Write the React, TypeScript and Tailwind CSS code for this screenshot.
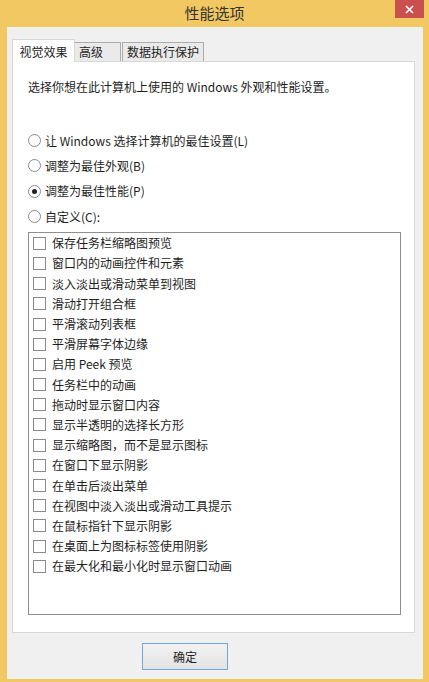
const font = { fontFamily: '"Noto Sans CJK SC", "Noto Sans", sans-serif' };

const items = [
  "保存任务栏缩略图预览",
  "窗口内的动画控件和元素",
  "淡入淡出或滑动菜单到视图",
  "滑动打开组合框",
  "平滑滚动列表框",
  "平滑屏幕字体边缘",
  "启用 Peek 预览",
  "任务栏中的动画",
  "拖动时显示窗口内容",
  "显示半透明的选择长方形",
  "显示缩略图，而不是显示图标",
  "在窗口下显示阴影",
  "在单击后淡出菜单",
  "在视图中淡入淡出或滑动工具提示",
  "在鼠标指针下显示阴影",
  "在桌面上为图标标签使用阴影",
  "在最大化和最小化时显示窗口动画",
];

const radios = [
  { label: "让 Windows 选择计算机的最佳设置(L)", checked: false },
  { label: "调整为最佳外观(B)", checked: false },
  { label: "调整为最佳性能(P)", checked: true },
  { label: "自定义(C):", checked: false },
];

function Radio({ checked }: { checked: boolean }) {
  return (
    <span className="w-[13px] h-[13px] rounded-full border border-[#8a8a8a] bg-white flex items-center justify-center shrink-0">
      {checked && <span className="w-[5px] h-[5px] rounded-full bg-[#222]" />}
    </span>
  );
}

export default function App() {
  return (
    <div
      className="w-[429px] h-[682px] bg-[#f1c862] flex flex-col text-[12px] text-[#1e1e1e] overflow-hidden"
      style={font}
    >
      {/* title bar */}
      <div className="h-[27px] shrink-0 relative flex items-center justify-center">
        <span className="text-[15px] text-[#333] leading-none -mt-[2px]">性能选项</span>
        <div className="absolute right-[5px] top-0 w-[29px] h-[18px] bg-[#c9504c] flex items-center justify-center">
          <svg width="9" height="9" viewBox="0 0 9 9">
            <path d="M1 1 L8 8 M8 1 L1 8" stroke="#fff" strokeWidth="1.6" />
          </svg>
        </div>
      </div>

      {/* client area */}
      <div className="ml-[7px] mr-[6px] h-[652px] bg-[#f0f0f0] flex flex-col">
        {/* tabs */}
        <div className="ml-[5px] mt-[12px] h-[22px] flex items-end">
          <div className="h-[23px] w-[63px] bg-white border border-b-0 border-[#d9d9d9] flex items-start justify-center pt-[3px] relative z-10 -mb-px">
            视觉效果
          </div>
          <div className="h-[19px] w-[46px] bg-[#eaeaea] border border-l-0 border-b-0 border-[#acacac] flex items-center pl-[4px]">
            高级
          </div>
          <div className="h-[19px] w-[82px] ml-px bg-[#eaeaea] border border-b-0 border-[#acacac] flex items-center justify-center">
            数据执行保护
          </div>
        </div>

        {/* panel */}
        <div className="ml-[5px] w-[403px] h-[572px] bg-white border border-[#d9d9d9] flex flex-col pl-[15px] pr-[13px]">
          <div className="mt-[17px] leading-[16px]">
            选择你想在此计算机上使用的 Windows 外观和性能设置。
          </div>

          <div className="mt-[33px] flex flex-col">
            {radios.map((r) => (
              <div key={r.label} className="h-[25.3px] flex items-center gap-[4px]">
                <Radio checked={r.checked} />
                <span className="leading-none">{r.label}</span>
              </div>
            ))}
          </div>

          <div className="mt-[3px] h-[383px] border border-[#8e8f8f] flex flex-col pl-[4px]">
            {items.map((t) => (
              <div key={t} className="h-[20.2px] flex items-center gap-[6px] shrink-0">
                <span className="w-[13px] h-[13px] border border-[#8a8a8a] bg-white shrink-0" />
                <span className="leading-none">{t}</span>
              </div>
            ))}
          </div>
        </div>

        {/* buttons */}
        <div className="mt-[10px] flex">
          <div className="ml-[135px] w-[86px] h-[27px] border border-[#6fa8dc] bg-gradient-to-b from-[#f2f2f2] to-[#e3e3e3] flex items-center justify-center">
            确定
          </div>
        </div>
      </div>
    </div>
  );
}
